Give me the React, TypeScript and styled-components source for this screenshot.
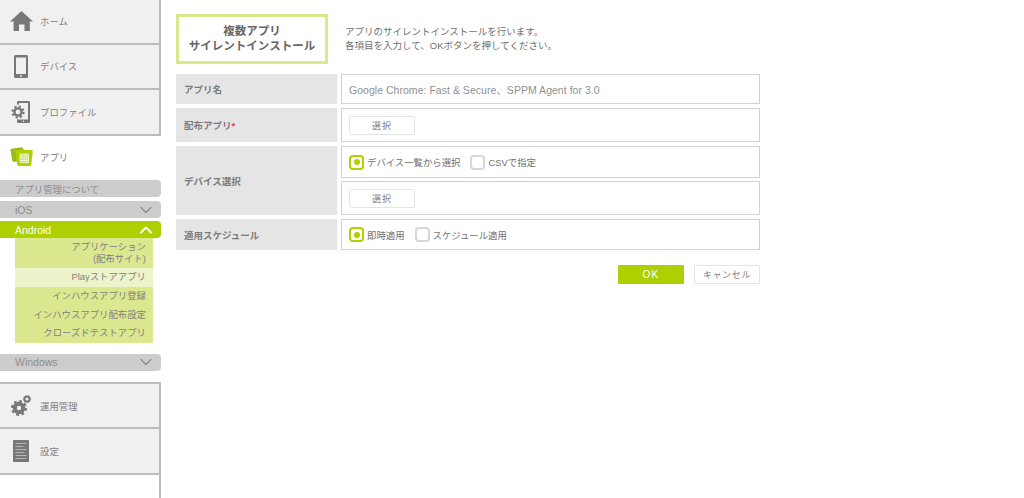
import React from "react";
import styled, { createGlobalStyle } from "styled-components";
import { ChevronDown, ChevronUp } from "lucide-react";

const GlobalStyle = createGlobalStyle`
  html, body {
    margin: 0;
    padding: 0;
    background: #fff;
    font-family: "Liberation Sans", "Noto Sans CJK JP", sans-serif;
    color: #777;
  }
  * {
    box-sizing: border-box;
  }
`;

const Page = styled.div`
  display: flex;
  width: 1024px;
  height: 498px;
  overflow: hidden;
`;

const Sidebar = styled.nav`
  width: 161px;
  flex-shrink: 0;
  display: flex;
  flex-direction: column;
`;

const NavGroup = styled.div`
  margin-top: -1px;
  border-right: 2px solid #bdbdbd;
`;

const BottomGroup = styled(NavGroup)`
  flex: 1;
  border-top: 2px solid #bdbdbd;
  margin-top: 11px;
`;

const NavItem = styled.div<{ $active?: boolean }>`
  height: ${(p) => (p.$active ? 44.5 : 45.5)}px;
  padding-bottom: ${(p) => (p.$active ? 2 : 0)}px;
  display: flex;
  align-items: center;
  background: ${(p) => (p.$active ? "#fff" : "#f0f0f0")};
  border-bottom: ${(p) => (p.$active ? "none" : "2px solid #bdbdbd")};
  font-size: 9.4px;
  color: #808080;
`;

const NavIcon = styled.div`
  width: 40px;
  display: flex;
  justify-content: center;
  padding-left: 2px;
`;

const Pill = styled.div<{ $on?: boolean; $gap?: number }>`
  height: 17px;
  margin-top: ${(p) => p.$gap ?? 0}px;
  padding: 0 5px 0 15px;
  display: flex;
  align-items: center;
  justify-content: space-between;
  font-size: 10.5px;
  color: ${(p) => (p.$on ? "#fff" : "#8c8c8c")};
  background: ${(p) => (p.$on ? "#aecf00" : "#cccccc")};
  border-radius: 0 4px 4px 0;
`;

const PillJa = styled.span`
  font-size: 9.4px;
`;

const SubMenu = styled.ul`
  list-style: none;
  margin: 0 8px 0 15px;
  padding: 0;
  background: #dce88f;
`;

const SubItem = styled.li<{ $current?: boolean; $tall?: boolean }>`
  height: ${(p) => (p.$tall ? 30 : 18.7)}px;
  padding-right: 7px;
  display: flex;
  align-items: center;
  justify-content: flex-end;
  text-align: right;
  font-size: 9.4px;
  line-height: 12px;
  color: #808080;
  background: ${(p) => (p.$current ? "#edf4cc" : "transparent")};
`;

const Main = styled.main`
  width: 584px;
  margin-left: 15px;
  padding-top: 14px;
`;

const Head = styled.header`
  display: flex;
  align-items: center;
  margin-bottom: 10px;
`;

const TitleBox = styled.h1`
  width: 152px;
  height: 50px;
  margin: 0 17px 0 0;
  border: 3px solid #d9e88a;
  display: flex;
  align-items: center;
  justify-content: center;
  text-align: center;
  font-size: 11.5px;
  line-height: 15px;
  font-weight: 700;
  color: #666;
`;

const Lead = styled.p`
  margin: 0;
  font-size: 9.5px;
  line-height: 14px;
  color: #707070;
`;

const Form = styled.div`
  display: flex;
  flex-direction: column;
  gap: 4px;
`;

const Row = styled.div`
  display: flex;
  gap: 4px;
`;

const Label = styled.div`
  width: 161px;
  flex-shrink: 0;
  padding-left: 8px;
  display: flex;
  align-items: center;
  background: #e5e5e5;
  font-size: 9.5px;
  font-weight: 700;
  color: #7a7a7a;
`;

const Req = styled.span`
  color: #d0405a;
`;

const Fields = styled.div`
  flex: 1;
  display: flex;
  flex-direction: column;
  gap: 3px;
`;

const Field = styled.div<{ $h: number }>`
  height: ${(p) => p.$h}px;
  padding-left: 7px;
  border: 1px solid #d2d2d2;
  display: flex;
  align-items: center;
  font-size: 9.4px;
  color: #777;
`;

const InputText = styled.span`
  font-size: 10.5px;
  letter-spacing: 0.03px;
  color: #919191;
`;

const SelectButton = styled.button`
  width: 66px;
  height: 19px;
  padding: 0;
  border: 1px solid #e4e4e4;
  border-radius: 2px;
  background: #fff;
  font: inherit;
  font-size: 9px;
  letter-spacing: 1px;
  color: #808080;
`;

const Choice = styled.label`
  display: flex;
  align-items: center;
  gap: 3px;
  margin-right: 10px;
  font-size: 9.4px;
  color: #707070;
`;

const Radio = styled.span<{ $on?: boolean }>`
  width: 15px;
  height: 15px;
  border: 2px solid ${(p) => (p.$on ? "#aecf00" : "#d6d6d6")};
  border-radius: 4px;
  display: flex;
  align-items: center;
  justify-content: center;

  &::after {
    content: "";
    width: 6px;
    height: 6px;
    border-radius: 50%;
    background: ${(p) => (p.$on ? "#aecf00" : "transparent")};
  }
`;

const Actions = styled.div`
  display: flex;
  justify-content: flex-end;
  gap: 10px;
  margin-top: 15px;
`;

const OkButton = styled.button`
  width: 66px;
  height: 19px;
  padding: 0;
  border: none;
  border-radius: 1px;
  background: #aecf00;
  font-family: inherit;
  font-size: 10px;
  letter-spacing: 1.2px;
  color: #fff;
`;

const CancelButton = styled(OkButton)`
  border: 1px solid #e4e4e4;
  background: #fff;
  font-size: 9px;
  letter-spacing: 0.6px;
  color: #808080;
`;

const HomeIcon = () => (
  <svg width="23" height="20" viewBox="0 0 23 20">
    <path fill="#777" d="M11.5 0 L23 10.5 L19.8 10.5 L19.8 20 L14.5 20 L14.5 13.5 L9 13.5 L9 20 L3.6 20 L3.6 10.5 L0 10.5 Z" />
  </svg>
);

const DeviceIcon = () => (
  <svg width="14" height="23" viewBox="0 0 14 23">
    <rect x="0" y="0" width="14" height="23" rx="1.5" fill="#777" />
    <rect x="2" y="2.5" width="10" height="16.5" fill="#f0f0f0" />
    <circle cx="7" cy="21" r="0.9" fill="#f0f0f0" />
  </svg>
);

const ProfileIcon = () => (
  <svg width="20" height="22" viewBox="0 0 20 22">
    <rect x="6" y="0" width="13" height="22" rx="1.2" fill="#777" />
    <rect x="8" y="2" width="9" height="16.5" fill="#f0f0f0" />
    <circle cx="12.5" cy="20.3" r="0.8" fill="#f0f0f0" />
    <circle cx="7" cy="11" r="7.6" fill="#f0f0f0" />
    <circle cx="7" cy="11" r="3.6" fill="none" stroke="#777" strokeWidth="2.4" />
    <circle cx="7" cy="11" r="5.6" fill="none" stroke="#777" strokeWidth="2" strokeDasharray="2.2 2.2" />
  </svg>
);

const AppIcon = () => (
  <svg width="23" height="19" viewBox="0 0 23 19">
    <path fill="#97bd14" d="M0.5 2.8 Q0.5 1.8 1.6 1.7 L12 0.3 L14 3 L9 14 L3.5 15 Q2.6 15 2.4 14 Z" />
    <path fill="#aecf00" d="M6 3 H21.5 Q23 3 22.8 4.5 L21.3 17.5 Q21 19 19.7 19 H9 Q7.5 19 7.3 17.5 L5 4.5 Q4.8 3 6 3 Z" />
    <rect x="9.5" y="6.5" width="9.5" height="9.5" rx="1" fill="#eef5c5" />
    <path stroke="#aecf00" strokeWidth="1" strokeDasharray="1.1 1" d="M10.5 8 H18 M10.5 10.2 H18 M10.5 12.4 H18 M10.5 14.6 H18" />
  </svg>
);

const GearsIcon = () => (
  <svg width="20" height="21" viewBox="0 0 20 21">
    <circle cx="8" cy="13" r="4.2" fill="none" stroke="#777" strokeWidth="4" />
    <circle cx="8" cy="13" r="7" fill="none" stroke="#777" strokeWidth="2" strokeDasharray="2.9 2.6" />
    <circle cx="16" cy="4" r="2.6" fill="none" stroke="#777" strokeWidth="2" />
    <circle cx="16" cy="4" r="3.7" fill="none" stroke="#777" strokeWidth="0.8" strokeDasharray="1.3 1.3" />
  </svg>
);

const DocIcon = () => (
  <svg width="16" height="22" viewBox="0 0 16 22">
    <rect x="0" y="0" width="16" height="22" rx="1" fill="#777" />
    <path stroke="#b5b5b5" strokeWidth="1" d="M2.5 3.5 H13.5 M2.5 6.5 H10.5 M2.5 9.5 H13.5 M2.5 12.5 H11.5 M2.5 15.5 H13.5 M2.5 18.5 H13.5" />
  </svg>
);

export default function App() {
  return (
    <>
      <GlobalStyle />
      <Page>
        <Sidebar>
          <NavGroup>
            <NavItem><NavIcon><HomeIcon /></NavIcon>ホーム</NavItem>
            <NavItem><NavIcon><DeviceIcon /></NavIcon>デバイス</NavItem>
            <NavItem><NavIcon><ProfileIcon /></NavIcon>プロファイル</NavItem>
          </NavGroup>
          <NavItem $active><NavIcon><AppIcon /></NavIcon>アプリ</NavItem>
          <Pill><PillJa>アプリ管理について</PillJa></Pill>
          <Pill $gap={4}>iOS<ChevronDown size={20} color="#8c8c8c" strokeWidth={1.4} /></Pill>
          <Pill $gap={3} $on>Android<ChevronUp size={20} color="#fff" strokeWidth={2.2} /></Pill>
          <SubMenu>
            <SubItem $tall>アプリケーション<br />(配布サイト)</SubItem>
            <SubItem $current>Playストアアプリ</SubItem>
            <SubItem>インハウスアプリ登録</SubItem>
            <SubItem>インハウスアプリ配布設定</SubItem>
            <SubItem>クローズドテストアプリ</SubItem>
          </SubMenu>
          <Pill $gap={11}>Windows<ChevronDown size={20} color="#8c8c8c" strokeWidth={1.4} /></Pill>
          <BottomGroup>
            <NavItem><NavIcon><GearsIcon /></NavIcon>運用管理</NavItem>
            <NavItem><NavIcon><DocIcon /></NavIcon>設定</NavItem>
          </BottomGroup>
        </Sidebar>
        <Main>
          <Head>
            <TitleBox>複数アプリ<br />サイレントインストール</TitleBox>
            <Lead>
              アプリのサイレントインストールを行います。<br />
              各項目を入力して、OKボタンを押してください。
            </Lead>
          </Head>
          <Form>
            <Row>
              <Label>アプリ名</Label>
              <Fields>
                <Field $h={30}><InputText>Google Chrome: Fast &amp; Secure、SPPM Agent for 3.0</InputText></Field>
              </Fields>
            </Row>
            <Row>
              <Label>配布アプリ<Req>*</Req></Label>
              <Fields>
                <Field $h={34}><SelectButton>選択</SelectButton></Field>
              </Fields>
            </Row>
            <Row>
              <Label>デバイス選択</Label>
              <Fields>
                <Field $h={32}>
                  <Choice><Radio $on />デバイス一覧から選択</Choice>
                  <Choice><Radio />CSVで指定</Choice>
                </Field>
                <Field $h={34}><SelectButton>選択</SelectButton></Field>
              </Fields>
            </Row>
            <Row>
              <Label>適用スケジュール</Label>
              <Fields>
                <Field $h={31}>
                  <Choice><Radio $on />即時適用</Choice>
                  <Choice><Radio />スケジュール適用</Choice>
                </Field>
              </Fields>
            </Row>
          </Form>
          <Actions>
            <OkButton>OK</OkButton>
            <CancelButton>キャンセル</CancelButton>
          </Actions>
        </Main>
      </Page>
    </>
  );
}
